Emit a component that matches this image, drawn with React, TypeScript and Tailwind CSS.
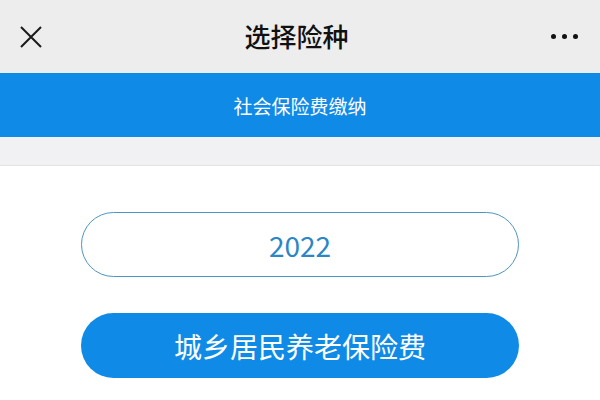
const font = { fontFamily: '"Noto Sans CJK SC", "Noto Sans", sans-serif' };

export default function App() {
    return (
        <div className="w-[600px] h-[400px] overflow-hidden bg-white flex flex-col" style={font}>
            {/* Top nav */}
            <div className="h-[73px] bg-[#ededed] flex items-center justify-between px-[20px]">
                <svg width="22" height="22" viewBox="0 0 22 22" className="text-[#1a1a1a]">
                    <path d="M1 1 L21 21 M21 1 L1 21" stroke="currentColor" strokeWidth="2" fill="none" />
                </svg>
                <h1 className="text-[26px] font-medium text-[#111] leading-none -mt-[1px]">选择险种</h1>
                <div className="flex items-center gap-[6px] pr-[2px]">
                    <span className="w-[5px] h-[5px] rounded-full bg-[#111]" />
                    <span className="w-[5px] h-[5px] rounded-full bg-[#111]" />
                    <span className="w-[5px] h-[5px] rounded-full bg-[#111]" />
                </div>
            </div>

            {/* Blue band */}
            <div className="h-[64px] bg-[#0f8ae6] flex items-center justify-center">
                <span className="text-white text-[19px] leading-none">社会保险费缴纳</span>
            </div>

            {/* Gray spacer */}
            <div className="h-[29px] bg-[#f1f1f3] border-b border-[#e2e2e2]" />

            {/* Content */}
            <div className="flex-1 flex flex-col items-center pt-[46px] gap-[36px]">
                <div className="w-[438px] h-[65px] rounded-full border border-[#4c95c4] flex items-center justify-center">
                    <span className="text-[28px] text-[#2a86c4] leading-none">2022</span>
                </div>
                <button className="w-[438px] h-[65px] rounded-full bg-[#0f8ae6] flex items-center justify-center">
                    <span className="text-[28px] text-white leading-none">城乡居民养老保险费</span>
                </button>
            </div>
        </div>
    );
}
